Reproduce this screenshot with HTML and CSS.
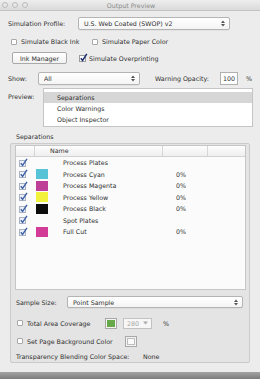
FILE: index.html
```html
<!DOCTYPE html>
<html>
<head>
<meta charset="utf-8">
<link rel="stylesheet" href="styles.css">
</head>
<body>
<div class="window">
  <div class="titlebar">
    <div class="lights"><span></span><span></span><span></span></div>
    <div class="title">Output Preview</div>
  </div>

  <div class="row r1">
    <span class="label w70">Simulation Profile:</span>
    <div class="select sel-profile"><span>U.S. Web Coated (SWOP) v2</span><svg class="arr" width="4" height="7" viewBox="0 0 4 7"><path d="M0 3L2 0.5L4 3Z M0 4L2 6.5L4 4Z" fill="#555"/></svg></div>
  </div>

  <div class="row r2">
    <span class="cb"></span><span class="t1">Simulate Black Ink</span>
    <span class="cb cb2"></span><span>Simulate Paper Color</span>
  </div>

  <div class="row r3">
    <div class="button">Ink Manager</div>
    <svg class="chk chk-over" width="9" height="9" viewBox="0 0 9 9"><rect x="0.5" y="2.5" width="6" height="6" fill="#fff" stroke="#9c9c9c"/><path d="M1.8 5.2L3.6 7.4L7.8 0.8" fill="none" stroke="#1d2f6e" stroke-width="1.5"/></svg>
    <span>Simulate Overprinting</span>
  </div>

  <div class="row r4">
    <span class="label w30">Show:</span>
    <div class="select sel-show"><span>All</span><svg class="arr" width="4" height="7" viewBox="0 0 4 7"><path d="M0 3L2 0.5L4 3Z M0 4L2 6.5L4 4Z" fill="#555"/></svg></div>
    <span class="wo">Warning Opacity:</span>
    <div class="input">100</div>
    <span class="pct">%</span>
  </div>

  <div class="row r5">
    <span class="label w35 plabel">Preview:</span>
    <div class="listbox">
      <div class="li sel">Separations</div>
      <div class="li">Color Warnings</div>
      <div class="li">Object Inspector</div>
    </div>
  </div>

  <div class="glabel">Separations</div>
  <div class="group">
    <div class="table">
      <div class="thead">
        <div class="c0"></div>
        <div class="c1">Name</div>
        <div class="c2"></div>
        <div class="c3"></div>
      </div>
      <div class="tr"><svg class="chk" width="10" height="9" viewBox="0 0 10 9"><rect x="0.5" y="2.5" width="6" height="6" fill="#eef1f6" stroke="#a9b2c2"/><path d="M1.8 5.2L3.6 7.4L8 0.8" fill="none" stroke="#3c5fa8" stroke-width="1.4"/></svg><span class="sw"></span><span class="nm">Process Plates</span><span class="pc"></span></div>
      <div class="tr"><svg class="chk" width="10" height="9" viewBox="0 0 10 9"><rect x="0.5" y="2.5" width="6" height="6" fill="#eef1f6" stroke="#a9b2c2"/><path d="M1.8 5.2L3.6 7.4L8 0.8" fill="none" stroke="#3c5fa8" stroke-width="1.4"/></svg><span class="sw cyan"></span><span class="nm">Process Cyan</span><span class="pc">0%</span></div>
      <div class="tr"><svg class="chk" width="10" height="9" viewBox="0 0 10 9"><rect x="0.5" y="2.5" width="6" height="6" fill="#eef1f6" stroke="#a9b2c2"/><path d="M1.8 5.2L3.6 7.4L8 0.8" fill="none" stroke="#3c5fa8" stroke-width="1.4"/></svg><span class="sw magenta"></span><span class="nm">Process Magenta</span><span class="pc">0%</span></div>
      <div class="tr"><svg class="chk" width="10" height="9" viewBox="0 0 10 9"><rect x="0.5" y="2.5" width="6" height="6" fill="#eef1f6" stroke="#a9b2c2"/><path d="M1.8 5.2L3.6 7.4L8 0.8" fill="none" stroke="#3c5fa8" stroke-width="1.4"/></svg><span class="sw yellow"></span><span class="nm">Process Yellow</span><span class="pc">0%</span></div>
      <div class="tr"><svg class="chk" width="10" height="9" viewBox="0 0 10 9"><rect x="0.5" y="2.5" width="6" height="6" fill="#eef1f6" stroke="#a9b2c2"/><path d="M1.8 5.2L3.6 7.4L8 0.8" fill="none" stroke="#3c5fa8" stroke-width="1.4"/></svg><span class="sw black"></span><span class="nm">Process Black</span><span class="pc">0%</span></div>
      <div class="tr"><svg class="chk" width="10" height="9" viewBox="0 0 10 9"><rect x="0.5" y="2.5" width="6" height="6" fill="#eef1f6" stroke="#a9b2c2"/><path d="M1.8 5.2L3.6 7.4L8 0.8" fill="none" stroke="#3c5fa8" stroke-width="1.4"/></svg><span class="sw"></span><span class="nm">Spot Plates</span><span class="pc"></span></div>
      <div class="tr"><svg class="chk" width="10" height="9" viewBox="0 0 10 9"><rect x="0.5" y="2.5" width="6" height="6" fill="#eef1f6" stroke="#a9b2c2"/><path d="M1.8 5.2L3.6 7.4L8 0.8" fill="none" stroke="#3c5fa8" stroke-width="1.4"/></svg><span class="sw pink"></span><span class="nm">Full Cut</span><span class="pc">0%</span></div>
    </div>

    <div class="grow g1">
      <span class="label w51">Sample Size:</span>
      <div class="select sel-sample"><span>Point Sample</span><svg class="arr" width="4" height="7" viewBox="0 0 4 7"><path d="M0 3L2 0.5L4 3Z M0 4L2 6.5L4 4Z" fill="#555"/></svg></div>
    </div>

    <div class="grow g2">
      <span class="cb"></span><span class="tac">Total Area Coverage</span>
      <span class="swbox"><span class="green"></span></span>
      <div class="numfield"><span>280</span><svg width="5" height="4" viewBox="0 0 5 4"><path d="M0 0.5L5 0.5L2.5 3.5Z" fill="#aaa"/></svg></div>
      <span class="pct2">%</span>
    </div>

    <div class="grow g3">
      <span class="cb"></span><span class="spb">Set Page Background Color</span>
      <span class="swbox white"><span></span></span>
    </div>

    <div class="grow g4">
      <span class="tbcs">Transparency Blending Color Space:</span>
      <span>None</span>
    </div>
  </div>

  <div class="bottomband"></div>
</div>
</body>
</html>
```

FILE: styles.css
```css
* { box-sizing: border-box; }
html, body { margin: 0; padding: 0; }
body { background: #ececec; }

.window {
  width: 260px;
  height: 379px;
  background: #ececec;
  font-family: "DejaVu Sans", sans-serif;
  font-size: 6.3px;
  color: #2e2e2e;
  white-space: nowrap;
  display: flex;
  flex-direction: column;
  overflow: hidden;
}

.titlebar {
  height: 11px;
  flex: none;
  background: linear-gradient(#eeeeee, #dadada);
  border-bottom: 1px solid #c2c2c2;
  display: flex;
  align-items: center;
}
.lights { display: flex; gap: 4px; padding-left: 2px; }
.lights span {
  width: 6px; height: 6px; border-radius: 50%;
  border: 1px solid #bcbcbc;
  background: #e6e6e6;
}
.title {
  flex: 1;
  text-align: center;
  color: #8a8a8a;
  padding-right: 26px;
}

.row { display: flex; align-items: center; flex: none; }
.label { flex: none; }
.w70 { width: 70px; }
.w30 { width: 30px; }
.w35 { width: 35px; }
.w51 { width: 51px; }

.r1 { margin-top: 6px; height: 13px; padding-left: 8px; }
.select {
  height: 13px;
  background: linear-gradient(#ffffff, #f4f4f4);
  border: 1px solid #b4b4b4;
  border-radius: 2px;
  display: flex;
  align-items: center;
  justify-content: space-between;
  padding: 0 4px 0 5px;
  box-shadow: 0 0.5px 0.5px rgba(0,0,0,0.08);
}
.sel-profile { width: 152px; }

.r2 { margin-top: 6px; height: 11px; padding-left: 11px; }
.cb {
  width: 6px; height: 6px;
  border: 1px solid #a8a8a8;
  background: #fff;
  border-radius: 1px;
  margin-right: 4px;
  flex: none;
}
.t1 { width: 57px; }
.cb2 { margin-left: 14px; }

.r3 { margin-top: 5px; height: 12px; padding-left: 12px; }
.button {
  width: 55px; height: 12px;
  border: 1px solid #a9a9a9;
  border-radius: 2px;
  background: linear-gradient(#ffffff, #f1f1f1);
  display: flex; align-items: center; justify-content: center;
}
.chk { flex: none; }
.chk-over { margin-left: 12px; margin-right: 1px; margin-top: -2px; }

.r4 { margin-top: 8px; height: 13px; padding-left: 8px; }
.sel-show { width: 102px; }
.wo { margin-left: 15px; width: 65px; }
.input {
  width: 18px; height: 13px;
  border: 1px solid #b0b0b0;
  background: #fff;
  text-align: right;
  padding-right: 2px;
  line-height: 11px;
}
.pct { margin-left: 8px; }

.r5 { margin-top: 3px; height: 39px; padding-left: 8px; align-items: flex-start; }
.plabel { padding-top: 5px; }
.listbox {
  width: 210px; height: 39px;
  border: 1px solid #c4c4c4;
  background: #fff;
  padding-top: 3px;
}
.li { height: 11px; line-height: 11px; padding-left: 13px; }
.li.sel { background: #d6d6d6; }

.glabel { margin-top: 6px; height: 8px; line-height: 8px; padding-left: 16px; flex: none; }

.group {
  margin: 2px 0 0 10px;
  width: 240px;
  height: 220px;
  flex: none;
  border: 1px solid #cbcbcb;
  border-radius: 2px;
  background: #e4e4e4;
  padding: 1px 4px 0 4px;
  display: flex;
  flex-direction: column;
}

.table {
  width: 231px;
  height: 145px;
  flex: none;
  border: 1px solid #c6c6c6;
  background: #fbfbfb;
}
.thead {
  height: 11px;
  display: flex;
  background: linear-gradient(#fdfdfd, #efefef);
  border-bottom: 1px solid #d2d2d2;
}
.thead > div { height: 100%; border-right: 1px solid #d6d6d6; line-height: 10px; }
.c0 { width: 19px; }
.c1 { width: 128px; padding-left: 15px; }
.c2 { width: 45px; }
.c3 { flex: 1; border-right: none !important; }

.tr { height: 11.5px; display: flex; align-items: center; padding-left: 3px; }
.tr .chk { margin-right: 7px; margin-top: -1px; }
.sw { width: 12px; height: 10px; flex: none; }
.cyan { background: #56c3d6; }
.magenta { background: #bd3f96; }
.yellow { background: #f2f23c; }
.black { background: #0c0c0c; }
.pink { background: #d23c96; }
.nm { width: 113px; margin-left: 15px; }

.grow { display: flex; align-items: center; flex: none; padding-left: 1px; }
.g1 { margin-top: 6px; height: 12px; }
.sel-sample { width: 176px; height: 12px; }
.g2 { margin-top: 9px; height: 12px; padding-left: 2px; }
.tac { width: 78px; }
.swbox {
  width: 12px; height: 11px;
  border: 1px solid #a8a8a8;
  background: #f4f4f4;
  padding: 1px;
  flex: none;
}
.swbox span { display: block; width: 100%; height: 100%; }
.green { background: #67a94a; }
.swbox.white span { background: #fafafa; border: 1px solid #bdbdbd; }
.numfield {
  margin-left: 6px;
  width: 29px; height: 11px;
  border: 1px solid #c2c2c2;
  background: #f7f7f7;
  color: #a3a3a3;
  display: flex; align-items: center; justify-content: space-between;
  padding: 0 3px 0 3px;
}
.pct2 { margin-left: 11px; }
.g3 { margin-top: 6px; height: 12px; padding-left: 2px; }
.spb { width: 98px; }
.g4 { margin-top: 5px; height: 8px; }
.tbcs { width: 127px; }

.bottomband {
  margin-top: auto;
  height: 7px;
  flex: none;
  background: linear-gradient(#a4a4a4, #7c7c7c);
}
```
